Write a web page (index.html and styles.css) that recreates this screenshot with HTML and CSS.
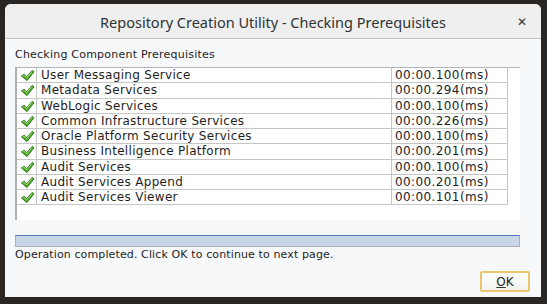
FILE: index.html
```html
<!DOCTYPE html>
<html lang="en">
 <head>
  <meta charset="utf-8">
  <title>Repository Creation Utility - Checking Prerequisites</title>
  <link rel="stylesheet" href="styles.css">
 </head>
 <body>
  <div class="dialog">
   <div class="titlebar">
    <span class="title">Repository Creation Utility - Checking Prerequisites</span>
    <span class="close">&#x2715;</span>
   </div>
   <div class="content">
    <div class="caption">Checking Component Prerequisites</div>
    <div class="tablebox">
     <table class="grid">
      <tr><td class="ic"><svg viewBox="0 0 16 14"><path d="M1.5 7.5 L4.5 5.5 L7 8.5 L13 1.5 L15 3 L7.5 12.5 Z" fill="#4fae2a" stroke="#2d6e17" stroke-width="1" stroke-linejoin="round"/><path d="M3 7.3 L4.5 6.4 L7 9.5 L13 2.6" fill="none" stroke="#9ee07a" stroke-width="1"/></svg></td><td class="nm">User Messaging Service</td><td class="tm">00:00.100(ms)</td></tr>
      <tr><td class="ic"><svg viewBox="0 0 16 14"><path d="M1.5 7.5 L4.5 5.5 L7 8.5 L13 1.5 L15 3 L7.5 12.5 Z" fill="#4fae2a" stroke="#2d6e17" stroke-width="1" stroke-linejoin="round"/><path d="M3 7.3 L4.5 6.4 L7 9.5 L13 2.6" fill="none" stroke="#9ee07a" stroke-width="1"/></svg></td><td class="nm">Metadata Services</td><td class="tm">00:00.294(ms)</td></tr>
      <tr><td class="ic"><svg viewBox="0 0 16 14"><path d="M1.5 7.5 L4.5 5.5 L7 8.5 L13 1.5 L15 3 L7.5 12.5 Z" fill="#4fae2a" stroke="#2d6e17" stroke-width="1" stroke-linejoin="round"/><path d="M3 7.3 L4.5 6.4 L7 9.5 L13 2.6" fill="none" stroke="#9ee07a" stroke-width="1"/></svg></td><td class="nm">WebLogic Services</td><td class="tm">00:00.100(ms)</td></tr>
      <tr><td class="ic"><svg viewBox="0 0 16 14"><path d="M1.5 7.5 L4.5 5.5 L7 8.5 L13 1.5 L15 3 L7.5 12.5 Z" fill="#4fae2a" stroke="#2d6e17" stroke-width="1" stroke-linejoin="round"/><path d="M3 7.3 L4.5 6.4 L7 9.5 L13 2.6" fill="none" stroke="#9ee07a" stroke-width="1"/></svg></td><td class="nm">Common Infrastructure Services</td><td class="tm">00:00.226(ms)</td></tr>
      <tr><td class="ic"><svg viewBox="0 0 16 14"><path d="M1.5 7.5 L4.5 5.5 L7 8.5 L13 1.5 L15 3 L7.5 12.5 Z" fill="#4fae2a" stroke="#2d6e17" stroke-width="1" stroke-linejoin="round"/><path d="M3 7.3 L4.5 6.4 L7 9.5 L13 2.6" fill="none" stroke="#9ee07a" stroke-width="1"/></svg></td><td class="nm">Oracle Platform Security Services</td><td class="tm">00:00.100(ms)</td></tr>
      <tr><td class="ic"><svg viewBox="0 0 16 14"><path d="M1.5 7.5 L4.5 5.5 L7 8.5 L13 1.5 L15 3 L7.5 12.5 Z" fill="#4fae2a" stroke="#2d6e17" stroke-width="1" stroke-linejoin="round"/><path d="M3 7.3 L4.5 6.4 L7 9.5 L13 2.6" fill="none" stroke="#9ee07a" stroke-width="1"/></svg></td><td class="nm">Business Intelligence Platform</td><td class="tm">00:00.201(ms)</td></tr>
      <tr><td class="ic"><svg viewBox="0 0 16 14"><path d="M1.5 7.5 L4.5 5.5 L7 8.5 L13 1.5 L15 3 L7.5 12.5 Z" fill="#4fae2a" stroke="#2d6e17" stroke-width="1" stroke-linejoin="round"/><path d="M3 7.3 L4.5 6.4 L7 9.5 L13 2.6" fill="none" stroke="#9ee07a" stroke-width="1"/></svg></td><td class="nm">Audit Services</td><td class="tm">00:00.100(ms)</td></tr>
      <tr><td class="ic"><svg viewBox="0 0 16 14"><path d="M1.5 7.5 L4.5 5.5 L7 8.5 L13 1.5 L15 3 L7.5 12.5 Z" fill="#4fae2a" stroke="#2d6e17" stroke-width="1" stroke-linejoin="round"/><path d="M3 7.3 L4.5 6.4 L7 9.5 L13 2.6" fill="none" stroke="#9ee07a" stroke-width="1"/></svg></td><td class="nm">Audit Services Append</td><td class="tm">00:00.201(ms)</td></tr>
      <tr><td class="ic"><svg viewBox="0 0 16 14"><path d="M1.5 7.5 L4.5 5.5 L7 8.5 L13 1.5 L15 3 L7.5 12.5 Z" fill="#4fae2a" stroke="#2d6e17" stroke-width="1" stroke-linejoin="round"/><path d="M3 7.3 L4.5 6.4 L7 9.5 L13 2.6" fill="none" stroke="#9ee07a" stroke-width="1"/></svg></td><td class="nm">Audit Services Viewer</td><td class="tm">00:00.101(ms)</td></tr>
     </table>
    </div>
    <div class="progress"><div class="fill"></div></div>
    <div class="status">Operation completed. Click OK to continue to next page.</div>
    <div class="buttons">
     <button class="ok"><u>O</u>K</button>
    </div>
   </div>
  </div>
 </body>
</html>
```
FILE: styles.css
```css
html, body {
  margin:0; height:100%;
}
body {
  background:#2a2623;
  padding:4px 6px 7px 5px; box-sizing:border-box;
  font-family:"DejaVu Sans", sans-serif; color:#1e1e1e;
}
.dialog {
  height:100%; display:flex; flex-direction:column;
  background:#f6f8f9; border-radius:6px 6px 0 0; overflow:hidden;
}
.titlebar {
  height:33px; flex:none; position:relative;
  display:flex; align-items:center; justify-content:center;
  background:#efefef; border-bottom:1px solid #c2c2c2;
  padding-top:1px;
}
.title {
  font-family:"Noto Sans", sans-serif; font-size:14.5px; color:#2e3436;
}
.close {
  position:absolute; right:14px; top:11px;
  font-size:12px; font-weight:bold; color:#2e3436;
}
.content {
  flex:1; display:flex; flex-direction:column;
  padding:9px 11px 0 10px;
}
.caption {
  font-size:11px; letter-spacing:0.22px; line-height:14px;
}
.tablebox {
  margin-top:5px; height:152px; width:503px;
  background:#fff; border-top:1px solid #b4b4b4; border-left:2px solid #b0b0b0;
}
.grid {
  border-collapse:collapse; width:491px;
  font-size:12px; letter-spacing:0.3px;
}
.grid td {
  padding:0; border:1px solid #c6c6c6; border-top:none;
  line-height:13.25px; white-space:nowrap;
}
.grid td.ic { width:19px; border-left:none; }
.grid td.nm { padding-left:4px; padding-top:1px; }
.grid td.tm { width:112px; padding-left:3px; padding-top:1px; letter-spacing:0.4px; }
.ic svg { width:15px; height:13px; display:block; margin:1px 0 0 3px; }
.progress {
  margin-top:15px; width:503px; height:10px;
  border:1px solid #a8b0bc; border-top:1px solid #4d79c3;
  background:#c9d6e8;
}
.status {
  font-size:11px; letter-spacing:0.12px; line-height:14px; margin-top:1px;
}
.buttons {
  display:flex; justify-content:flex-end; margin-top:9px;
}
.ok {
  width:50px; height:21px; padding:0;
  font-family:"DejaVu Sans", sans-serif; font-size:12px; color:#222;
  background:linear-gradient(#ffffff, #f1f1ef);
  border:2px solid #e8c66e; border-radius:2px;
}
.ok u { text-decoration-color:#333; }
```
